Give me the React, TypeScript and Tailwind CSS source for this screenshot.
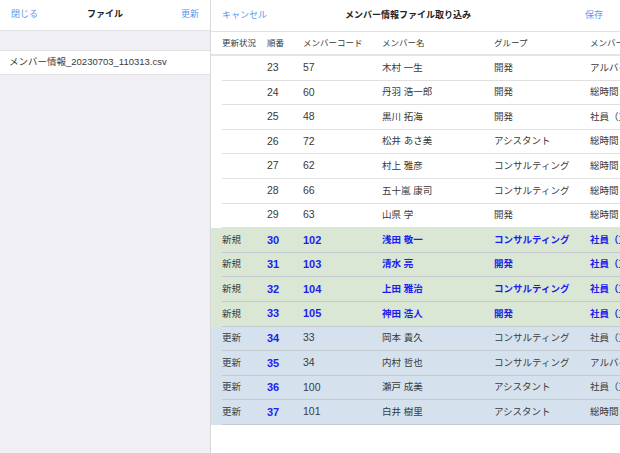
import React from 'react'

type Row = {
  status: string
  no: number
  code: number
  name: string
  group: string
  type: string
  kind: 'none' | 'new' | 'update'
}

const rows: Row[] = [
  { status: '', no: 23, code: 57, name: '木村 一生', group: '開発', type: 'アルバイト', kind: 'none' },
  { status: '', no: 24, code: 60, name: '丹羽 浩一郎', group: '開発', type: '総時間', kind: 'none' },
  { status: '', no: 25, code: 48, name: '黒川 拓海', group: '開発', type: '社員（正', kind: 'none' },
  { status: '', no: 26, code: 72, name: '松井 あさ美', group: 'アシスタント', type: '総時間', kind: 'none' },
  { status: '', no: 27, code: 62, name: '村上 雅彦', group: 'コンサルティング', type: '総時間', kind: 'none' },
  { status: '', no: 28, code: 66, name: '五十嵐 康司', group: 'コンサルティング', type: '総時間', kind: 'none' },
  { status: '', no: 29, code: 63, name: '山県 学', group: '開発', type: '総時間', kind: 'none' },
  { status: '新規', no: 30, code: 102, name: '浅田 敬一', group: 'コンサルティング', type: '社員（正', kind: 'new' },
  { status: '新規', no: 31, code: 103, name: '清水 亮', group: '開発', type: '社員（正', kind: 'new' },
  { status: '新規', no: 32, code: 104, name: '上田 雅治', group: 'コンサルティング', type: '社員（正', kind: 'new' },
  { status: '新規', no: 33, code: 105, name: '神田 浩人', group: '開発', type: '社員（正', kind: 'new' },
  { status: '更新', no: 34, code: 33, name: '岡本 貴久', group: 'コンサルティング', type: '社員（正', kind: 'update' },
  { status: '更新', no: 35, code: 34, name: '内村 哲也', group: 'コンサルティング', type: 'アルバイト', kind: 'update' },
  { status: '更新', no: 36, code: 100, name: '瀬戸 成美', group: 'アシスタント', type: '社員（正', kind: 'update' },
  { status: '更新', no: 37, code: 101, name: '白井 樹里', group: 'アシスタント', type: '総時間', kind: 'update' },
]

const cols = 'grid grid-cols-[45px_36px_79px_112px_96px_120px]'

export default function App() {
  return (
    <div
      className="w-[620px] h-[453px] flex overflow-hidden bg-white text-[9.5px] text-[#3a3a3a]"
      style={{ fontFamily: "'Liberation Sans','Noto Sans CJK JP',sans-serif" }}
    >
      {/* file list */}
      <div className="w-[211px] shrink-0 bg-[#efeff4] border-r border-[#d8d8dc] flex flex-col">
        <div className="h-[31px] bg-white border-b border-[#e2e2e6] grid grid-cols-3 items-center px-[11px] text-[9px]">
          <span className="text-[#5a98ef]">閉じる</span>
          <span className="text-center font-bold text-[#222]">ファイル</span>
          <span className="text-right text-[#5a98ef]">更新</span>
        </div>
        <div className="h-[19px]" />
        <div className="h-[25px] bg-white border-y border-[#e2e2e6] flex items-center px-[9px]">
          メンバー情報_20230703_110313.csv
        </div>
      </div>

      {/* import table */}
      <div className="flex-1 flex flex-col min-w-0">
        <div className="h-[32px] border-b border-[#e2e2e6] flex items-center pl-[11px] pr-[17px] text-[9px]">
          <span className="text-[#5a98ef]">キャンセル</span>
          <span className="ml-[78px] font-bold text-[#222]">メンバー情報ファイル取り込み</span>
          <span className="flex-1" />
          <span className="text-[#5a98ef]">保存</span>
        </div>
        <div className={`${cols} h-[24px] items-center pl-[11px] border-b-2 border-[#e4e4e4] whitespace-nowrap text-[8.5px]`}>
          <span>更新状況</span>
          <span>順番</span>
          <span>メンバーコード</span>
          <span>メンバー名</span>
          <span>グループ</span>
          <span>メンバー区分</span>
        </div>
        <div className="flex flex-col">
          {rows.map(r => {
            const bg = r.kind === 'new' ? 'bg-[#d9e7d4]' : r.kind === 'update' ? 'bg-[#d5e2ee]' : 'bg-white'
            const line = r.kind === 'none' ? 'border-[#e0e0e0]' : 'border-[#c3cacf]'
            const allBlue = r.kind === 'new'
            const hl = 'font-bold text-[#1d1df0]'
            return (
              <div key={r.no} className={`${bg} pl-[11px]`}>
                <div className={`${cols} h-[24.6px] items-center border-b ${line} whitespace-nowrap overflow-hidden`}>
                  <span>{r.status}</span>
                  <span className={r.kind !== 'none' ? `text-[11px] ${hl}` : 'text-[10.5px]'}>{r.no}</span>
                  <span className={allBlue ? `text-[11px] ${hl}` : 'text-[10.5px]'}>{r.code}</span>
                  <span className={allBlue ? hl : ''}>{r.name}</span>
                  <span className={allBlue ? hl : ''}>{r.group}</span>
                  <span className={allBlue ? hl : ''}>{r.type}</span>
                </div>
              </div>
            )
          })}
        </div>
      </div>
    </div>
  )
}
